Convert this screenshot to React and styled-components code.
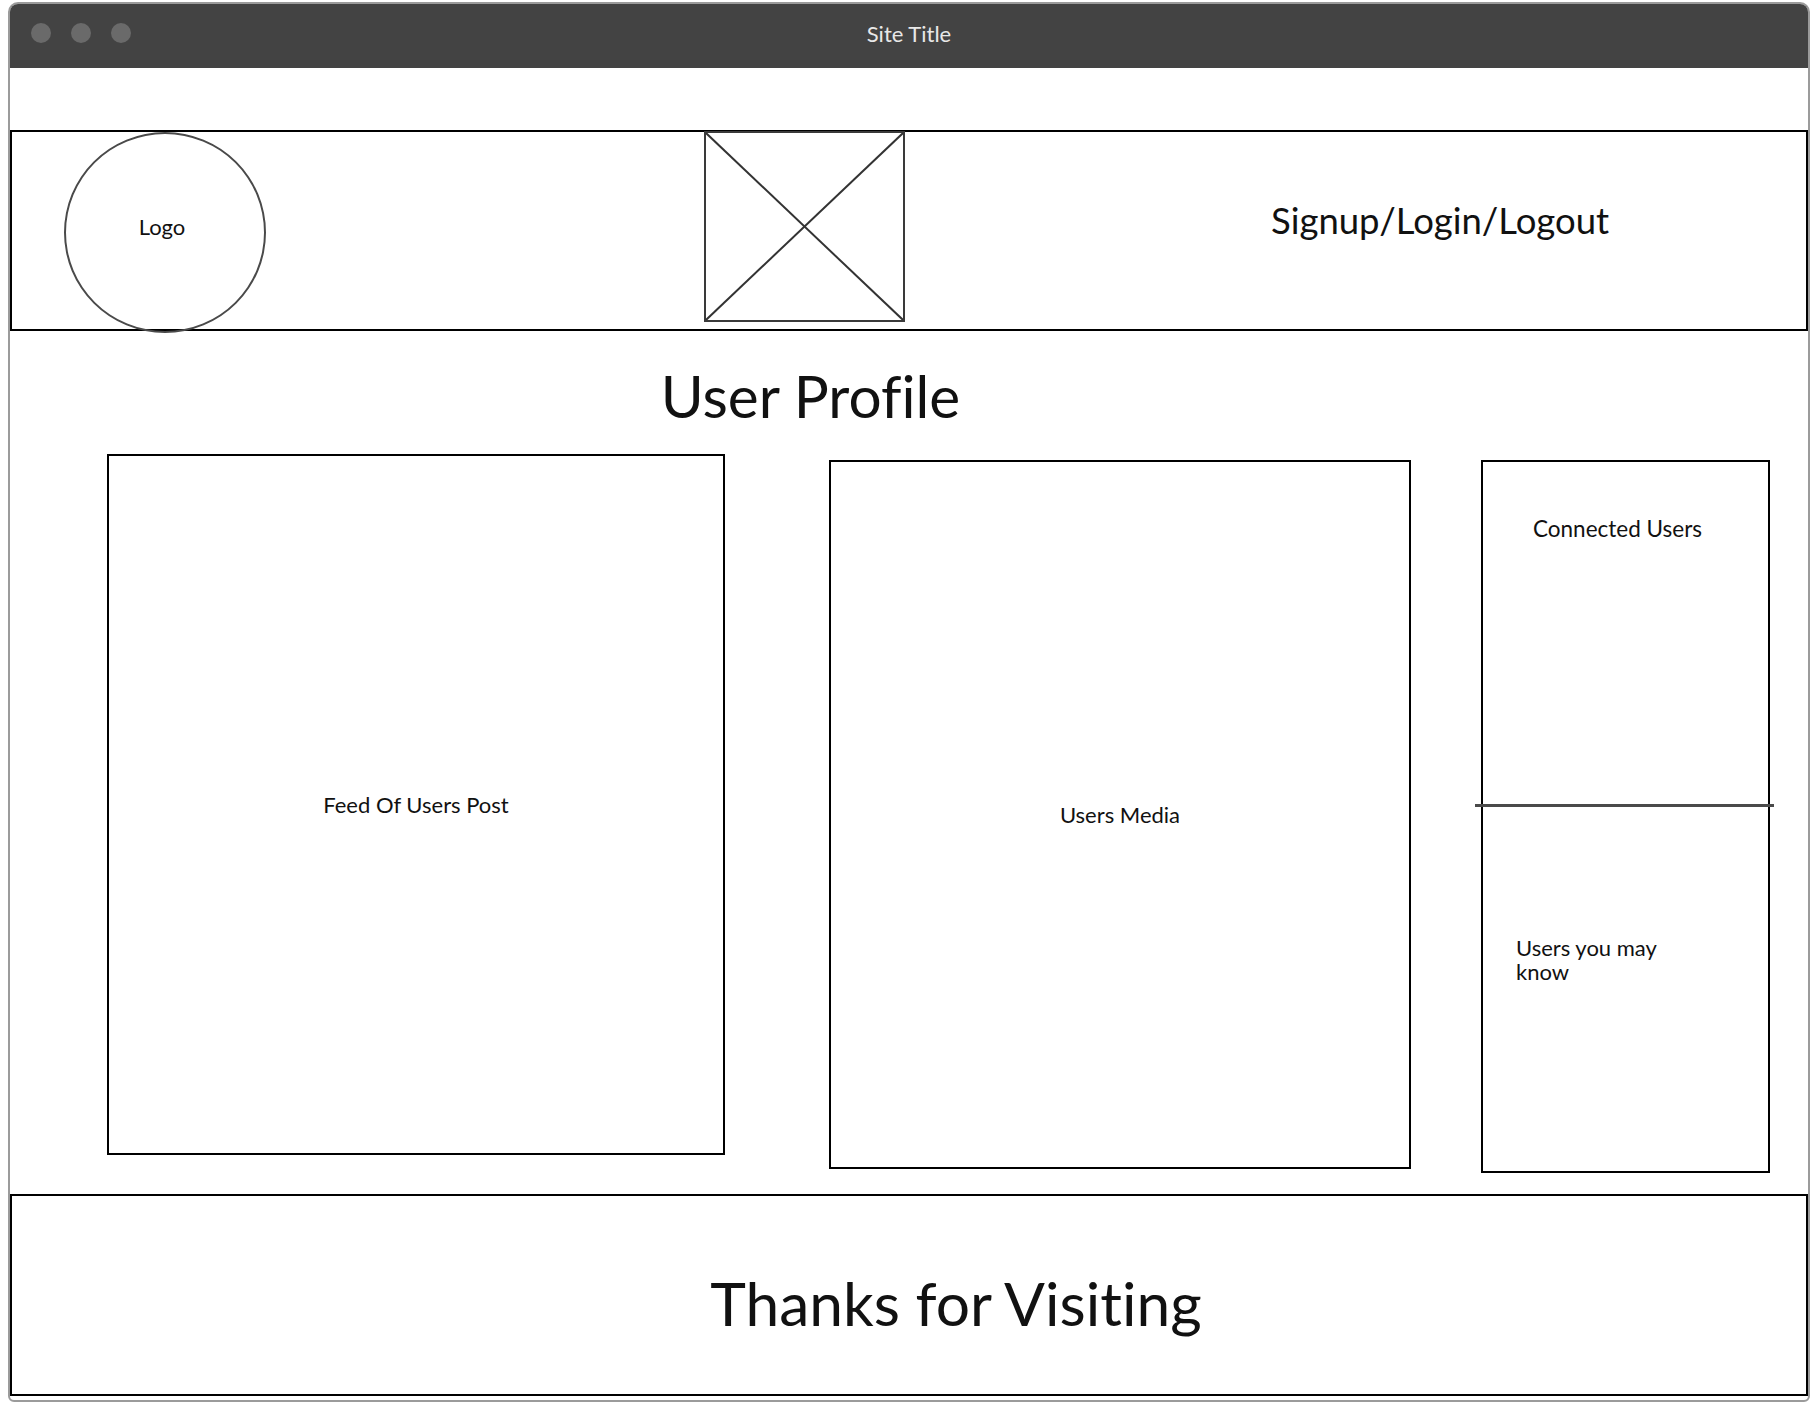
import React from 'react';
import styled, { createGlobalStyle } from 'styled-components';

const GlobalStyle = createGlobalStyle`
  html, body {
    margin: 0;
    background: #fff;
  }
  body {
    font-family: Lato, "Liberation Sans", sans-serif;
    font-variant-ligatures: none;
    color: #111;
  }
`;

const Page = styled.div`
  padding: 2px 4px 6px 8px;
`;

const Window = styled.div`
  width: 1802px;
  box-sizing: border-box;
  border: 2px solid #9b9b9b;
  border-radius: 10px 10px 6px 6px;
  overflow: hidden;
  background: #fff;
  padding-bottom: 4px;
`;

const TitleBar = styled.div`
  height: 64px;
  background: #434343;
  display: grid;
  grid-template-columns: 1fr auto 1fr;
  align-items: center;
  padding-bottom: 6px;
  box-sizing: border-box;
`;

const Dots = styled.div`
  display: flex;
  gap: 20px;
  padding-left: 21px;
`;

const Dot = styled.span`
  width: 20px;
  height: 20px;
  border-radius: 50%;
  background: #6a6a6a;
`;

const SiteTitle = styled.div`
  color: #e8e8e8;
  font-size: 22px;
`;

const Spacer = styled.div`
  height: 62px;
`;

const Header = styled.header`
  display: flex;
  align-items: flex-start;
  height: 201px;
  box-sizing: border-box;
  border: 2px solid #000;
  padding-left: 52px;
`;

const LogoCircle = styled.div`
  flex: none;
  width: 202px;
  height: 201px;
  box-sizing: border-box;
  border: 2px solid #4a4a4a;
  border-radius: 50%;
  display: flex;
  align-items: center;
  justify-content: center;
  font-size: 22px;
  padding: 0 6px 12px 0;
`;

const ImageBox = styled.div`
  flex: none;
  width: 201px;
  height: 191px;
  margin: -1px 0 0 438px;
  box-sizing: border-box;
  border: 2px solid #3a3a3a;

  svg {
    display: block;
    width: 100%;
    height: 100%;
  }
`;

const AuthLinks = styled.div`
  align-self: center;
  margin: 0 0 22px 366px;
  font-size: 36.5px;
  white-space: nowrap;
`;

const Content = styled.main`
  height: 863px;
  box-sizing: border-box;
  padding: 28px 0 0 97px;
`;

const Heading = styled.h1`
  margin: 0;
  padding-right: 294px;
  text-align: center;
  font-size: 58.5px;
  line-height: 72px;
  font-weight: 400;
`;

const Row = styled.div`
  display: flex;
  align-items: flex-start;
  margin-top: 23px;
`;

const Panel = styled.section`
  flex: none;
  width: ${(p) => p.w}px;
  height: ${(p) => p.h}px;
  margin-top: ${(p) => p.top || 0}px;
  margin-left: ${(p) => p.left || 0}px;
  box-sizing: border-box;
  border: 2px solid #000;
  display: flex;
  align-items: center;
  justify-content: center;
  font-size: 22px;
`;

const Sidebar = styled(Panel)`
  flex-direction: column;
  align-items: stretch;
  justify-content: flex-start;
`;

const SideTop = styled.div`
  height: 342px;
  padding: 53px 0 0 50px;
  box-sizing: border-box;
  line-height: 28px;
  font-size: 22.5px;
`;

const Divider = styled.div`
  height: 3px;
  background: #4a4a4a;
  margin: 0 -6px 0 -8px;
`;

const SideBottom = styled.div`
  padding: 129px 0 0 33px;
  line-height: 24px;
  width: 170px;
`;

const Footer = styled.footer`
  height: 202px;
  box-sizing: border-box;
  border: 2px solid #000;
  display: flex;
  align-items: center;
  justify-content: center;
  padding: 14px 0 0 94px;
  font-size: 60.5px;
`;

const App = () => {
  return (
    <Page>
      <GlobalStyle />
      <Window>
        <TitleBar>
          <Dots>
            <Dot />
            <Dot />
            <Dot />
          </Dots>
          <SiteTitle>Site Title</SiteTitle>
          <div />
        </TitleBar>
        <Spacer />
        <Header>
          <LogoCircle>Logo</LogoCircle>
          <ImageBox>
            <svg viewBox="0 0 100 100" preserveAspectRatio="none">
              <line x1="0" y1="0" x2="100" y2="100" stroke="#333" strokeWidth="2" vectorEffect="non-scaling-stroke" />
              <line x1="100" y1="0" x2="0" y2="100" stroke="#333" strokeWidth="2" vectorEffect="non-scaling-stroke" />
            </svg>
          </ImageBox>
          <AuthLinks>Signup/Login/Logout</AuthLinks>
        </Header>
        <Content>
          <Heading>User Profile</Heading>
          <Row>
            <Panel w={618} h={701}>Feed Of Users Post</Panel>
            <Panel w={582} h={709} top={6} left={104}>Users Media</Panel>
            <Sidebar w={289} h={713} top={6} left={70}>
              <SideTop>Connected Users</SideTop>
              <Divider />
              <SideBottom>Users you may know</SideBottom>
            </Sidebar>
          </Row>
        </Content>
        <Footer>Thanks for Visiting</Footer>
      </Window>
    </Page>
  );
};

export default App;
